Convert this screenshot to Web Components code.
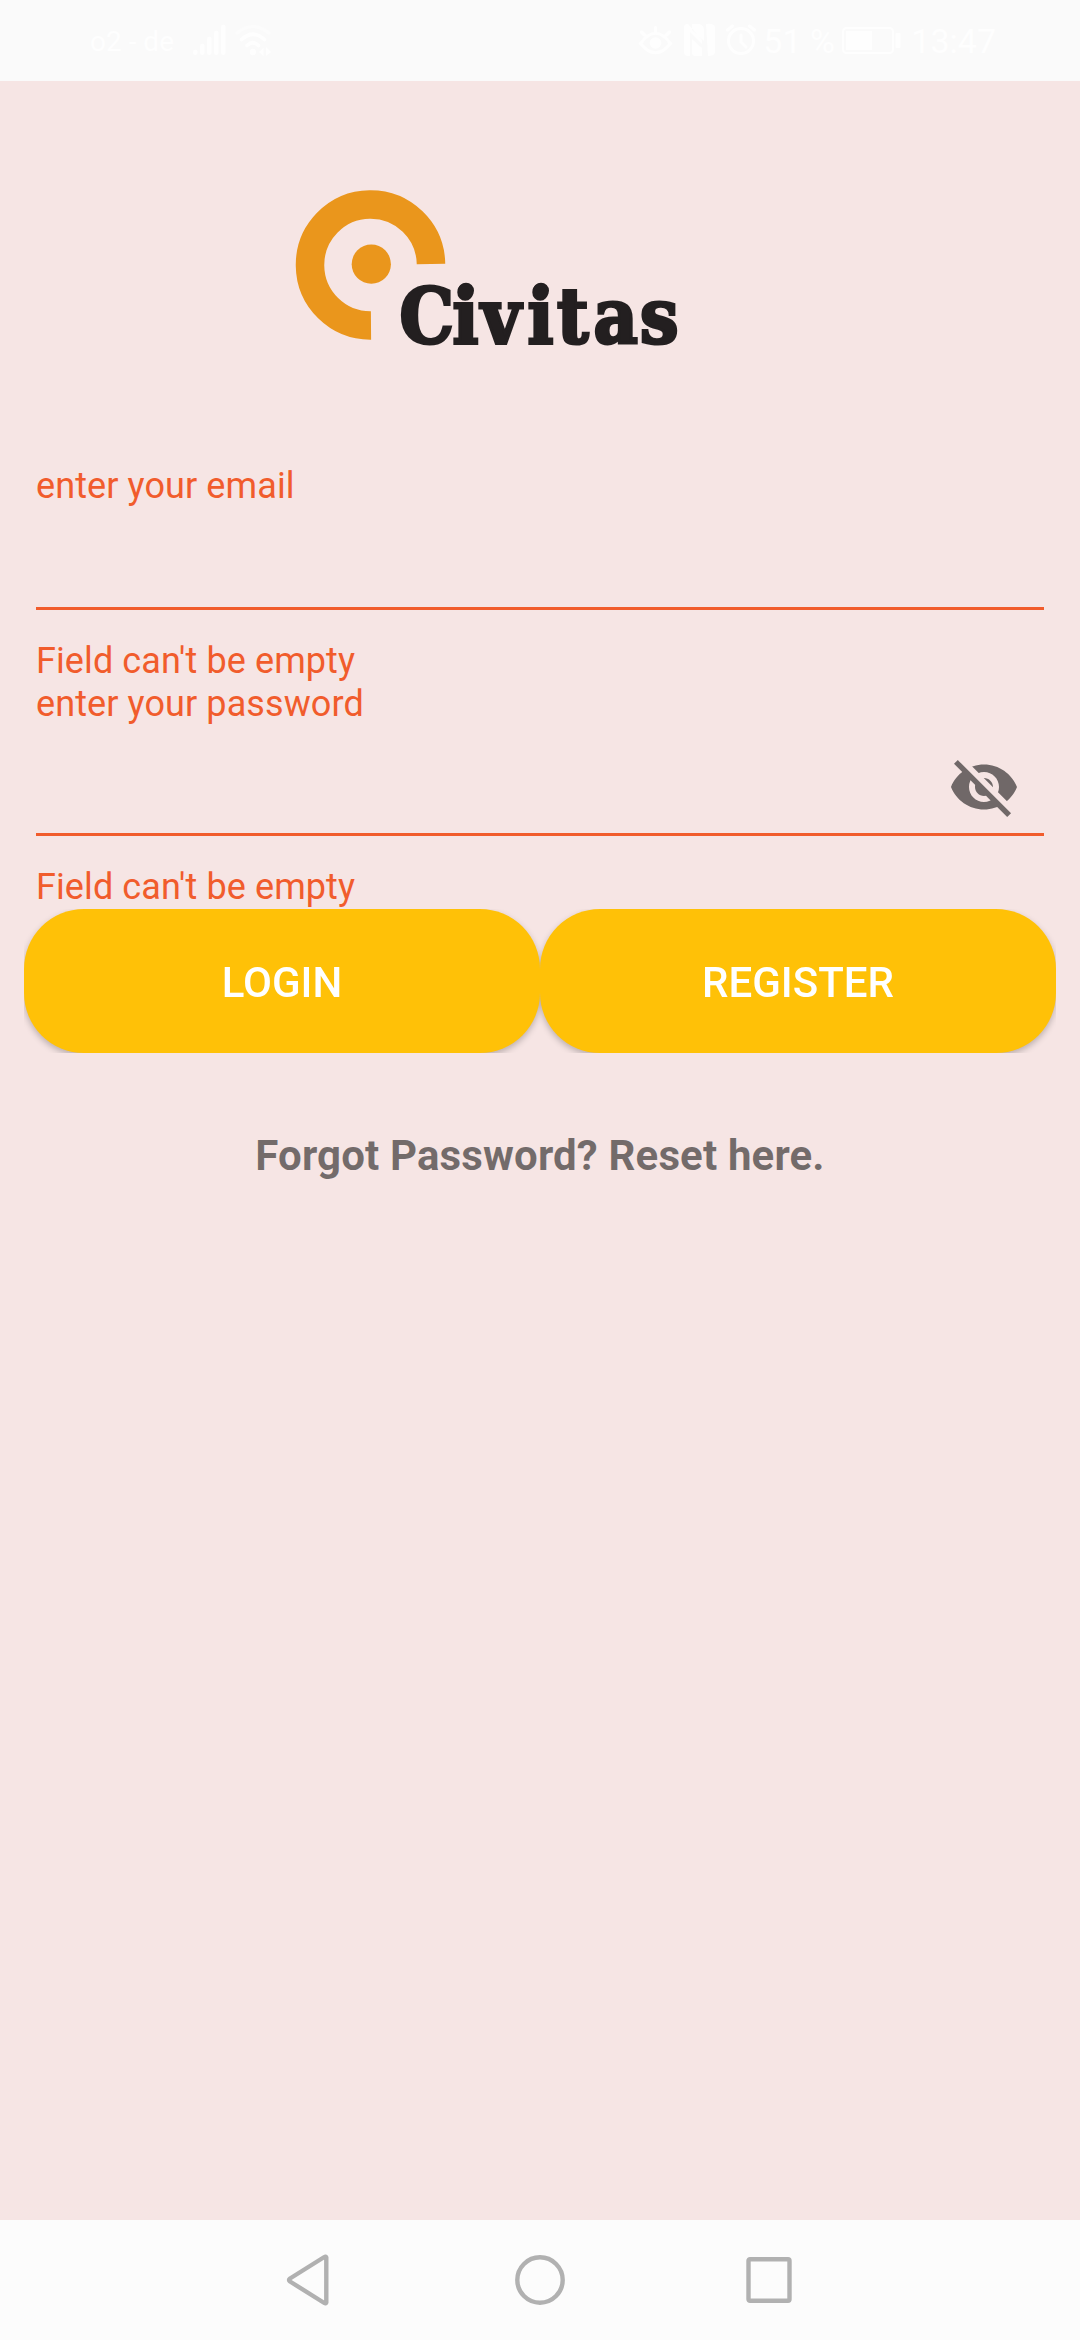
<!DOCTYPE html>
<html lang="en">
<head>
<meta charset="utf-8">
<title>Civitas</title>
<style>
html,body{margin:0;padding:0}
body{font-family:Roboto,"Liberation Sans",sans-serif;background:#f6e5e4}
</style>
</head>
<body>
<civitas-app></civitas-app>
<script>
const define = (name, html) => customElements.define(name, class extends HTMLElement {
  constructor() {
    super();
    const t = document.createElement('template');
    t.innerHTML = html;
    this.attachShadow({ mode: 'open' }).append(t.content.cloneNode(true));
  }
});

define('status-bar', `
<style>
:host{display:flex;height:81px;background:#fafafa;color:#fefefe;box-sizing:border-box;padding:0 84px 0 90px;justify-content:space-between;align-items:flex-start}
div{display:flex;align-items:flex-start}
span{white-space:pre;display:block}
.carrier{font-size:28px;line-height:34px;margin-top:25px;width:103px}
.num{font-size:34px;line-height:40px;margin-top:21px}
svg{display:block;fill:#fefefe}
</style>
<div>
  <span class="carrier">o2 - de</span>
  <svg width="80" height="81" viewBox="193 0 80 81">
    <g stroke="#fefefe" stroke-width="4.4" stroke-linecap="round"><path d="M195.3 52v.7M202.3 46v6.7M209.3 39v13.7M216.3 33v19.7M223.3 27v25.7"/></g>
    <g fill="none" stroke="#fefefe" stroke-width="3.6" stroke-linecap="round"><path opacity=".35" d="M237 33Q253 20 269 33"/><path d="M241.500 39.500Q253 29 264.500 39.500M247 45.500Q253 40 258.500 45.500"/></g>
    <circle cx="253" cy="52" r="3.2"/><path d="M259 52l4.500-4v8zM266 47l5 5-5 4z"/>
  </svg>
</div>
<div>
  <svg width="125" height="81" viewBox="640 0 125 81">
    <g fill="none" stroke="#fefefe" stroke-width="3.200" stroke-linecap="round"><path d="M642.500 43.500Q657.500 23 672.500 43.500Q657.500 62 642.500 43.500ZM657.500 27.500v5M643.500 32l4 4M671.500 32l-4 4"/></g><circle cx="657.500" cy="43" r="5.800"/>
    <path d="M690 24h-1q-3 0-3 3v25q0 4 4 4h2V32l12 12v4l-10-9v14q0 3 3 3h7V40L690 24ZM694 24h8q4 2 4 6v11l-12-11ZM708 24q9-1 9 4v24q0 4-7 4Z"/>
    <g fill="none" stroke="#fefefe" stroke-width="3" stroke-linecap="round"><circle cx="743" cy="41" r="12.500"/><path d="M743 35v7l5 5M729.500 30l5-4M756.500 30l-5-4"/></g>
  </svg>
  <span class="num" style="width:79px">51 %</span>
  <svg width="69" height="81" viewBox="844 0 69 81">
    <rect x="845" y="28" width="50" height="25" rx="3.500" fill="none" stroke="#fefefe" stroke-width="2"/><rect x="848" y="31" width="26" height="19"/><rect x="897.500" y="33" width="5" height="15" rx="1"/>
  </svg>
  <span class="num">13:47</span>
</div>`);

define('civitas-logo', `
<style>
:host{display:block;width:384px;height:153px}
svg{display:block;overflow:visible}
text{font-family:"DejaVu Serif Condensed","DejaVu Serif",serif;font-stretch:condensed;font-weight:bold;font-size:76px;fill:#231f20;stroke:#231f20;stroke-width:3px}
</style>
<svg width="384" height="153" viewBox="296 190 384 153">
  <path d="M371 325.500A60.500 60.500 0 1 1 431 264" fill="none" stroke="#ea961c" stroke-width="28.500"/>
  <circle cx="371.300" cy="264.200" r="19.600" fill="#ea961c"/>
  <text x="399.500 452.500 481 527.500 557 593.500 640" y="343">Civitas</text>
  <g fill="#231f20"><circle cx="466" cy="290.700" r="8"/><circle cx="541" cy="290.700" r="8"/></g>
</svg>`);

define('text-field', `
<style>
:host{display:block;color:#f15c2c;font-size:36px;line-height:43px}
.label,.error{display:block;white-space:pre;letter-spacing:.1px}
.entry{height:var(--entry,100px);border-bottom:3px solid #f15c2c;display:flex;justify-content:flex-end;box-sizing:border-box}
.error{margin-top:30px}
</style>
<slot class="label" name="label"></slot>
<div class="entry"><slot name="action"></slot></div>
<slot class="error" name="error"></slot>`);

define('visibility-toggle', `
<style>:host{display:block;width:72px;height:72px;margin:24.500px 24px 0 0}svg{display:block}</style>
<svg width="72" height="72" viewBox="0 0 24 24">
  <mask id="cut"><path fill="#fff" d="M0 0h24v24H0z"/><path d="M-1-1.950 25 24.050" stroke="#000" stroke-width="2.760"/></mask>
  <g opacity=".54"><path mask="url(#cut)" d="M12 4.500C7 4.500 2.730 7.610 1 12c1.730 4.390 6 7.500 11 7.500s9.270-3.110 11-7.500c-1.730-4.390-6-7.500-11-7.500zM12 17c-2.760 0-5-2.240-5-5s2.240-5 5-5 5 2.240 5 5-2.240 5-5 5zM12 9c-1.660 0-3 1.340-3 3s1.340 3 3 3 3-1.340 3-3-1.340-3-3-3z"/>
  <path d="M3.270 4.270 19.740 20.740" stroke="#000" stroke-width="1.800" stroke-linecap="square"/></g>
</svg>`);

define('pill-button', `
<style>
:host{display:flex;flex:1;height:144px;align-items:center;justify-content:center;border-radius:60px;background:#ffc107;color:#fff;font-size:42px;font-weight:500;line-height:50px;box-sizing:border-box;padding-top:4px}
</style><slot></slot>`);

define('nav-bar', `
<style>
:host{display:flex;height:120px;background:#fcfcfc;align-items:center;justify-content:center;gap:178px}
svg{display:block;fill:none;stroke:#b1b1b1;stroke-width:4.400;stroke-linejoin:round}
</style>
<svg width="52" height="52"><path d="M42.300 3.500v45q-.5 1.500-2 .5L6 27.500q-2-1.500 0-3L40.300 3q1.500-1 2 .5Z"/></svg>
<svg width="52" height="52"><circle cx="26" cy="26" r="22.700"/></svg>
<svg width="52" height="52"><rect x="4.500" y="5.200" width="41" height="41.600" rx="1.500"/></svg>`);

define('civitas-app', `
<style>
:host{display:flex;flex-direction:column;width:1080px;height:2340px;background:#f6e5e4;overflow:hidden}
main{flex:1;display:flex;flex-direction:column;min-height:0}
civitas-logo{margin:109px 0 0 296px}
.fields{margin:122px 36px 0}
.buttons{margin:0 24px;overflow:hidden;height:144px}
.row{display:flex;filter:drop-shadow(0 3px 3px rgba(0,0,0,.24))}
.forgot{margin-top:78px;text-align:center;font-size:42px;line-height:50px;font-weight:700;letter-spacing:.15px;color:rgba(0,0,0,.54)}
</style>
<status-bar></status-bar>
<main>
  <civitas-logo></civitas-logo>
  <div class="fields">
    <text-field style="--entry:102px"><span slot="label">enter your email</span><span slot="error">Field can't be empty</span></text-field>
    <text-field style="--entry:110px"><span slot="label">enter your password</span><visibility-toggle slot="action"></visibility-toggle><span slot="error">Field can't be empty</span></text-field>
  </div>
  <div class="buttons"><div class="row"><pill-button>LOGIN</pill-button><pill-button>REGISTER</pill-button></div></div>
  <div class="forgot">Forgot Password? Reset here.</div>
</main>
<nav-bar></nav-bar>`);
</script>
</body>
</html>
